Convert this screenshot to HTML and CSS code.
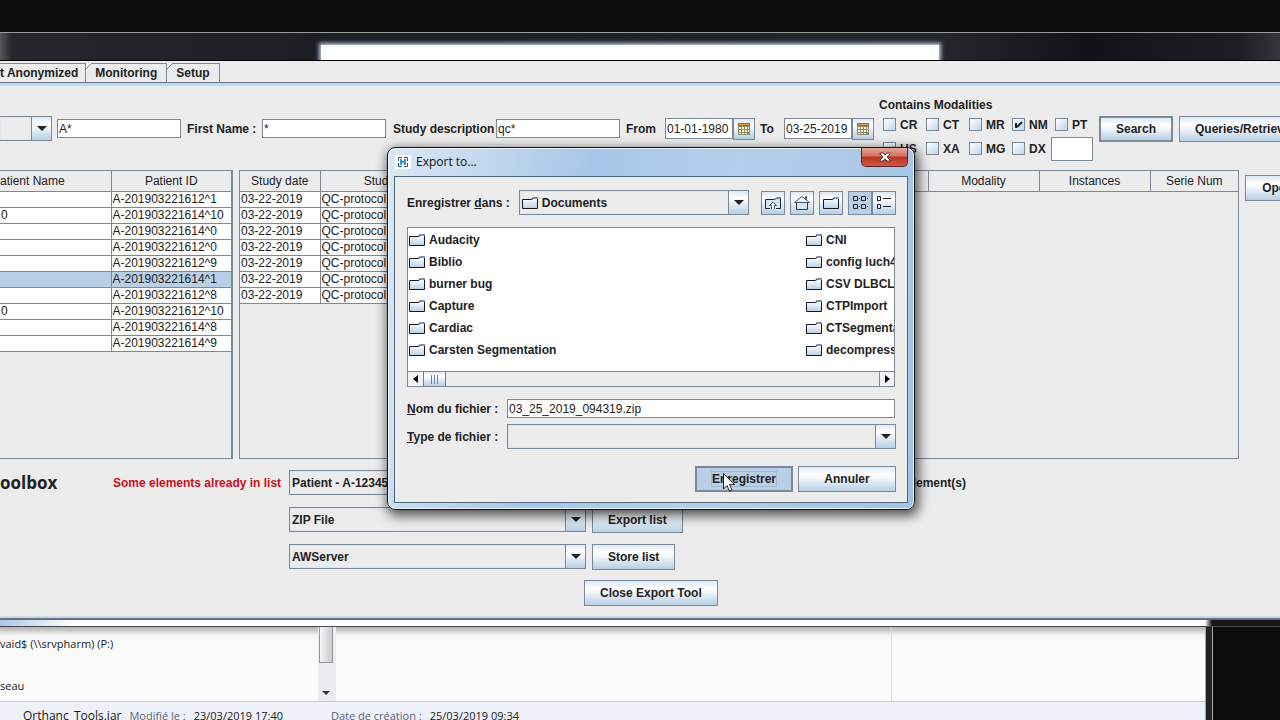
FILE: index.html
```html
<!DOCTYPE html>
<html lang="fr">
<head>
<meta charset="utf-8">
<title>Export to...</title>
<link rel="stylesheet" href="styles.css">
</head>
<body>
<svg class="defs" aria-hidden="true">
  <defs>
    <linearGradient id="fold" x1="0" y1="0" x2="0" y2="1"><stop offset="0" stop-color="#fff"/><stop offset="1" stop-color="#b8cfe5"/></linearGradient>
    <symbol id="folder" viewBox="0 0 16 16"><path d="M.5 4.500h9l2-1h4v10H.5z" fill="url(#fold)"/><path d="M9 4l2-2h5v2z" fill="#7a8fb5"/><path d="M.5 13.500v-9h9l1.500-1M15.500 4v9.500H.5" fill="none" stroke="#16181c"/></symbol>
    <symbol id="arrow" viewBox="0 0 10 5"><path d="M0 0h10L5 5z" fill="#222"/></symbol>
    <symbol id="calendar" viewBox="0 0 12 12"><path d="M0 0h12v12H0z" fill="#8f8d70"/><path d="M0 0h12v3H0z" fill="#b8641c"/><path d="M1 1h10v1H1z" fill="#e39a45"/><path d="M1 4h2v2H1zm3 0h2v2H4zm3 0h2v2H7zm3 0h1v2h-1zM1 7h2v2H1zm3 0h2v2H4zm3 0h2v2H7zm3 0h1v2h-1zM1 10h2v1H1zm3 0h2v1H4zm3 0h2v1H7z" fill="#fffbd0"/></symbol>
  </defs>
</svg>
<div class="desktop">
  <main class="window">
    <header class="titlebar"><div class="glass"></div></header>
    <nav class="tabs">
      <button class="tab first">t Anonymized</button><button class="tab">Monitoring</button><button class="tab">Setup</button>
    </nav>
    <section class="search">
      <div class="combo kind"><select aria-label="Search by"><option></option></select><span class="drop"><svg><use href="#arrow"/></svg></span></div>
      <input class="field" aria-label="Name" value="A*">
      <label class="l-first" for="first">First Name :</label><input class="field" id="first" value="*">
      <label class="l-study" for="study">Study description</label><input class="field" id="study" value="qc*">
      <label class="l-from" for="from">From</label><input class="field date" id="from" value="01-01-1980"><button class="cal" aria-label="Pick start date"><svg><use href="#calendar"/></svg></button>
      <label class="l-to" for="to">To</label><input class="field date" id="to" value="03-25-2019"><button class="cal" aria-label="Pick end date"><svg><use href="#calendar"/></svg></button>
      <div class="modalities">
        <div class="caption">Contains Modalities</div>
        <div class="checks">
          <label><input type="checkbox">CR</label><label><input type="checkbox">CT</label><label><input type="checkbox">MR</label><label><input type="checkbox" checked>NM</label><label><input type="checkbox">PT</label>
          <label><input type="checkbox">US</label><label><input type="checkbox">XA</label><label><input type="checkbox">MG</label><label><input type="checkbox">DX</label><input class="other" aria-label="Other modality">
        </div>
      </div>
      <button class="btn default">Search</button>
      <button class="btn queries">Queries/Retrieve</button>
    </section>
    <section class="results">
      <div class="panel patients">
        <table>
          <colgroup><col><col class="c-id"></colgroup>
          <thead><tr><th class="cut">atient Name</th><th>Patient ID</th></tr></thead>
          <tbody>
            <tr><td></td><td>A-201903221612^1</td></tr>
            <tr><td>0</td><td>A-201903221614^10</td></tr>
            <tr><td></td><td>A-201903221614^0</td></tr>
            <tr><td></td><td>A-201903221612^0</td></tr>
            <tr><td></td><td>A-201903221612^9</td></tr>
            <tr class="selected"><td></td><td>A-201903221614^1</td></tr>
            <tr><td></td><td>A-201903221612^8</td></tr>
            <tr><td>0</td><td>A-201903221612^10</td></tr>
            <tr><td></td><td>A-201903221614^8</td></tr>
            <tr><td></td><td>A-201903221614^9</td></tr>
          </tbody>
        </table>
      </div>
      <div class="panel studies">
        <table>
          <colgroup><col class="c-date"><col></colgroup>
          <thead><tr><th>Study date</th><th>Study Description</th></tr></thead>
          <tbody>
            <tr><td>03-22-2019</td><td>QC-protocol</td></tr>
            <tr><td>03-22-2019</td><td>QC-protocol</td></tr>
            <tr><td>03-22-2019</td><td>QC-protocol</td></tr>
            <tr><td>03-22-2019</td><td>QC-protocol</td></tr>
            <tr><td>03-22-2019</td><td>QC-protocol</td></tr>
            <tr><td>03-22-2019</td><td>QC-protocol</td></tr>
            <tr><td>03-22-2019</td><td>QC-protocol</td></tr>
          </tbody>
        </table>
      </div>
      <div class="panel series">
        <table>
          <colgroup><col><col class="c-mod"><col class="c-mod"><col class="c-num"></colgroup>
          <thead><tr><th></th><th>Modality</th><th>Instances</th><th>Serie Num</th></tr></thead>
        </table>
      </div>
      <button class="btn open">Open</button>
    </section>
    <section class="export">
      <h2>oolbox</h2>
      <p class="warning">Some elements already in list</p>
      <div class="controls">
        <div class="line">
          <div class="combo wide"><select aria-label="Export content"><option>Patient - A-12345</option></select><span class="drop"><svg><use href="#arrow"/></svg></span></div>
          <span class="count">element(s)</span>
        </div>
        <div class="line">
          <div class="combo wide"><select aria-label="Export format"><option>ZIP File</option></select><span class="drop"><svg><use href="#arrow"/></svg></span></div>
          <button class="btn">Export list</button>
        </div>
        <div class="line">
          <div class="combo wide"><select aria-label="Store destination"><option>AWServer</option></select><span class="drop"><svg><use href="#arrow"/></svg></span></div>
          <button class="btn">Store list</button>
        </div>
      </div>
      <button class="btn close-tool">Close Export Tool</button>
    </section>
    <div class="frame"><div class="frame-light"></div></div>
  </main>
  <section class="explorer">
    <div class="explorer-window">
      <div class="panes">
        <div class="tree"><div>vaid$ (\\srvpharm) (P:)</div><div>seau</div></div>
        <div class="scroll"><div class="thumb"></div><svg viewBox="0 0 8 4"><path d="M0 0h8L4 4z" fill="#333"/></svg></div>
        <div class="files"></div>
        <div class="preview"></div>
      </div>
      <div class="details"><span class="file">Orthanc_Tools.jar</span><span class="key">Modifié le :</span><span class="modified">23/03/2019 17:40</span><span class="key">Date de création :</span><span>25/03/2019 09:34</span></div>
    </div>
    <div class="edge"></div>
  </section>

  <div class="dialog" role="dialog" aria-label="Export to...">
    <div class="dialog-title">
      <svg class="logo" viewBox="0 0 16 14"><path d="M0 0h16v14H0z" fill="#fff"/><path d="M7 2.500H3.500V6M3.500 8v3.500H7M9 2.500h3.500V6M12.500 8v3.500H9" fill="none" stroke="#35586c"/><path d="M6 4v6M10 4v6M6 7h4" fill="none" stroke="#2b9bd0" stroke-width="2"/></svg>
      <span>Export to...</span>
      <button class="x" aria-label="Close"><svg viewBox="0 0 12 10"><path d="M1 1h3l2 2 2-2h3v1L8 5l3 3v1H8L6 7 4 9H1V8l3-3-3-3z" fill="#fff" stroke="#52363b"/></svg></button>
    </div>
    <form class="chooser">
      <div class="look">
        <label for="dir">Enregistrer <u>d</u>ans :</label>
        <div class="combo dir"><select id="dir"><option>Documents</option></select><svg class="folder"><use href="#folder"/></svg><span class="drop"><svg><use href="#arrow"/></svg></span></div>
        <button type="button" class="tool" aria-label="Up one level"><svg viewBox="0 0 16 16"><path d="M.5 13.500v-9H10l1.500-1h4v10z" fill="#d5e3f2"/><path d="M10 4l2-2h4v2z" fill="#6384b0"/><path d="M5 13.500H.5v-9h9l1.500-1M15.500 4v9.500H11" fill="none" stroke="#20262e"/><path d="M6.500 14v-3.500h-2L8 7l3.500 3.500h-2V14" fill="#fff" stroke="#2c5a8c"/></svg></button>
        <button type="button" class="tool" aria-label="Home"><svg viewBox="0 0 16 16"><path d="M2.500 7.500h11v7h-11z" fill="#d5e3f2" stroke="#333b44"/><path d="M11.500 4V1.500h1V5" fill="none" stroke="#46576a"/><path d="M.5 7.500L8 1.500l7.500 6z" fill="#eef4fa" stroke="#46576a"/></svg></button>
        <button type="button" class="tool" aria-label="New folder"><svg><use href="#folder"/></svg></button>
        <div class="views"><button type="button" class="tool on" aria-label="List"><svg viewBox="0 0 16 16" fill="none" stroke="#20262e"><path d="M1.500 1.500h4v4h-4zM9.500 1.500h4v4h-4zM1.500 9.500h4v4h-4zM9.500 9.500h4v4h-4z"/><path d="M7 3.500h1M15 3.500h1M7 11.500h1M15 11.500h1"/></svg></button><button type="button" class="tool" aria-label="Details"><svg viewBox="0 0 16 16" fill="none" stroke="#20262e"><path d="M1.500 1.500h3v4h-3zM1.500 9.500h3v4h-3zM7 3.500h8M7 11.500h8"/></svg></button></div>
      </div>
      <div class="browser">
        <ul class="listing">
          <li><svg class="folder"><use href="#folder"/></svg>Audacity</li>
          <li><svg class="folder"><use href="#folder"/></svg>Biblio</li>
          <li><svg class="folder"><use href="#folder"/></svg>burner bug</li>
          <li><svg class="folder"><use href="#folder"/></svg>Capture</li>
          <li><svg class="folder"><use href="#folder"/></svg>Cardiac</li>
          <li><svg class="folder"><use href="#folder"/></svg>Carsten Segmentation</li>
          <li><svg class="folder"><use href="#folder"/></svg>CNI</li>
          <li><svg class="folder"><use href="#folder"/></svg>config luch4</li>
          <li><svg class="folder"><use href="#folder"/></svg>CSV DLBCL</li>
          <li><svg class="folder"><use href="#folder"/></svg>CTPImport</li>
          <li><svg class="folder"><use href="#folder"/></svg>CTSegmentation</li>
          <li><svg class="folder"><use href="#folder"/></svg>decompress</li>
        </ul>
        <div class="hscroll"><span class="end"><svg viewBox="0 0 5 8"><path d="M5 0v8L0 4z"/></svg></span><span class="grip"><i></i><i></i><i></i></span><span class="track"></span><span class="end right"><svg viewBox="0 0 5 8"><path d="M0 0v8l5-4z"/></svg></span></div>
      </div>
      <div class="entry name"><label for="fname"><u>N</u>om du fichier :</label><input class="field" id="fname" value="03_25_2019_094319.zip"></div>
      <div class="entry"><label for="ftype"><u>T</u>ype de fichier :</label><div class="combo"><select id="ftype"><option></option></select><span class="drop"><svg><use href="#arrow"/></svg></span></div></div>
      <div class="actions">
        <button type="button" class="btn default pressed"><span>Enregistrer</span></button>
        <button type="button" class="btn">Annuler</button>
      </div>
    </form>
    <svg class="cursor" viewBox="0 0 12 19"><path d="M.5.500v15.500l3.500-3.500 2.500 5.500 2.500-1-2.500-5.500h5z" fill="#fff" stroke="#222"/></svg>
  </div>
</div>
</body>
</html>
```
FILE: styles.css
```css
* { box-sizing: border-box; }
body { margin: 0; background: #0c0c0c; color: #222; font: bold 12px/16px "Liberation Sans", Arial, sans-serif; overflow: hidden; }
button, input, select { font: inherit; color: inherit; margin: 0; border-radius: 0; }
svg { display: block; flex: none; }
.defs { position: absolute; width: 0; height: 0; }
.desktop { position: relative; height: 100vh; padding-top: 32px; display: flex; flex-direction: column; overflow: hidden; }

.window { flex: 1; min-height: 0; display: flex; flex-direction: column; background: #ececec; }
.titlebar { height: 29px; border-top: 1px solid #9b9b9b; border-bottom: 1px solid #000; background: linear-gradient(90deg, #55575a 0, #24272b 12px, #1b1e23 25%, #23262b 74%, #10141a 85%, #1c1f24 97%, #34373b); display: flex; overflow: hidden; }
.glass { flex: 1; margin: 12px 341px 0 321px; background: #fff; box-shadow: 0 0 4px 2px #b7cbe2; }

.tabs { height: 25px; padding-top: 2px; display: flex; border-bottom: 3px solid #c8d9e8; box-shadow: inset 0 -1px #60758e; flex: none; }
.tab { position: relative; height: 20px; padding: 0 9px 2px; background: none; border: 1px solid #7a8a99; border-width: 1px 1px 0 0; }
.tab.first { padding: 0 7px 2px 0; }
.tab + .tab::before { content: ""; position: absolute; left: 0; top: -1px; width: 6px; height: 6px; background: linear-gradient(135deg, #ececec 44%, #7a8a99 46%, #7a8a99 54%, #ececec 56%); }

.search { display: flex; align-items: center; height: 85px; flex: none; white-space: nowrap; }
.search > * { flex: none; }
.field { height: 19px; width: 124px; border: 1px solid #7a8a99; padding: 0 1px; background: #fff; font-weight: normal; outline: none; }
.field.date { width: 68px; height: 21px; }
.kind { width: 52px; margin-right: 5px; }
.combo.kind { border-left: 0; }
.l-first { width: 81px; padding-left: 6px; }
.l-study { width: 110px; padding-left: 7px; }
.l-from { width: 45px; padding-left: 6px; }
.l-to { width: 29px; padding-left: 5px; }
.cal { width: 22px; height: 22px; padding: 0; display: grid; place-items: center; border: 1px solid #7a8a99; background: linear-gradient(#dfe9f4, #fff 30%, #b8cfe5); }
.cal svg { width: 12px; height: 12px; }
.modalities { width: 214px; margin: 0 6px 0 5px; }
.caption { height: 16px; }
.checks { display: grid; grid-template-columns: repeat(5, 43px); grid-auto-rows: 24px; align-items: center; padding-left: 4px; width: 219px; }
.checks label { display: flex; align-items: center; gap: 4px; }
.checks input[type=checkbox] { appearance: none; width: 13px; height: 13px; border: 1px solid #7a8a99; background: linear-gradient(135deg, #fff, #c3d6ea); }
.checks input[type=checkbox]:checked { background: url("data:image/svg+xml,%3Csvg xmlns='http://www.w3.org/2000/svg' viewBox='0 0 11 11'%3E%3Cpath d='M3 4v5M4 8l5-5' fill='none' stroke='%23222' stroke-width='2'/%3E%3C/svg%3E"), linear-gradient(135deg, #fff, #c3d6ea); }
.other { width: 42px; height: 24px; border: 1px solid #7a8a99; background: #fff; margin-left: -4px; }

.btn { height: 26px; padding: 0 15px; border: 1px solid #7a8a99; background: linear-gradient(#dde8f3, #fff 30%, #f4f8fc 45%, #b8cfe5); white-space: nowrap; flex: none; }
.btn.default { border-width: 2px; }
.queries { margin-left: 6px; }

.combo { display: grid; grid-template-columns: 1fr 20px; height: 25px; border: 1px solid #7a8a99; box-shadow: inset 0 0 0 1px #dfe6f0; }
.combo select { grid-area: 1 / 1 / 2 / 3; appearance: none; border: 0; background: none; padding: 0 2px; outline: none; min-width: 0; }
.drop { grid-area: 1 / 2; display: grid; place-items: center; border-left: 1px solid #7a8a99; background: linear-gradient(#dde8f3, #fff 30%, #b8cfe5); pointer-events: none; }
.drop svg { width: 10px; height: 5px; }

.results { flex: 1; min-height: 0; display: flex; align-items: stretch; margin-top: -1px; font-weight: normal; }
.panel { border: 1px solid #7a8a99; border-right-width: 2px; margin-right: 6px; overflow: hidden; }
.patients { width: 233px; border-left: 0; }
.studies { width: 264px; }
.series { flex: 1; border-right-width: 1px; }
.panel table { width: 100%; table-layout: fixed; border-collapse: collapse; }
.panel th { height: 20px; padding: 0; font-weight: normal; border-right: 1px solid #7a8a99; border-bottom: 1px solid #7a8a99; white-space: nowrap; overflow: hidden; }
.panel td { height: 16px; line-height: 15px; padding: 0 1px; background: #fff; border-right: 1px solid #7a8a99; border-bottom: 1px solid #7a8a99; white-space: nowrap; overflow: hidden; }
.panel th:last-child, .panel td:last-child { border-right: 0; }
.panel th.cut { text-align: left; }
.panel .selected td { background: #b8cfe5; }
.c-id { width: 120px; }
.c-date { width: 80px; }
.c-mod { width: 111px; }
.c-num { width: 88px; }
.open { margin: 5px -30px 0 0; width: 65px; font-weight: bold; }

.export { display: grid; grid-template-columns: 113px 176px 1fr; padding: 11px 0 10px; flex: none; }
.export h2 { margin: 0; font: bold 17px/26px "Open Sans", sans-serif; }
.warning { margin: 0; line-height: 26px; color: #c80f1e; }
.controls { display: grid; gap: 12px; }
.line { display: flex; align-items: center; gap: 6px; height: 25px; }
.wide { width: 297px; }
.count { margin-left: 314px; }
.close-tool { grid-column: 3; justify-self: start; margin: 11px 0 0 295px; }
.frame { height: 11px; flex: none; border-top: 2px solid #cbd8ea; border-bottom: 1px solid #4a4a50; background: #66707e; }
.frame-light { height: 6px; margin-top: 2px; background: linear-gradient(90deg, #a8c8e6, #fff 75px, #fff 1205px, #15171b 1212px); }

.explorer { height: 93px; display: flex; flex: none; color: #1a1a1a; font: 12px/16px "Open Sans", "Noto Sans", sans-serif; }
.explorer-window { width: 1205px; display: flex; flex-direction: column; background: #fbfbfb; }
.panes { flex: 1; display: flex; background: linear-gradient(#b0b0b0, #f2f2f2 8px, #fbfbfb 14px); border-bottom: 1px solid #c3cfdf; }
.tree { width: 318px; padding-top: 9px; display: grid; align-content: start; gap: 26px; font-size: 11px; }
.scroll { width: 16px; display: flex; flex-direction: column; align-items: center; justify-content: space-between; background: #ececee; }
.thumb { width: 14px; height: 36px; border: 1px solid #999; border-top: 0; background: linear-gradient(90deg, #f6f6f6, #c9c9cb); }
.scroll svg { width: 8px; height: 4px; margin-bottom: 6px; }
.files { flex: 1; border-left: 2px solid #e8ebf0; }
.preview { width: 314px; border-left: 1px solid #dcdcde; }
.details { height: 18px; padding: 6px 0 0 23px; background: #eef1fa; display: flex; gap: 8px; white-space: nowrap; overflow: hidden; font-size: 11px; }
.file { font-size: 12px; }
.key { color: #5c6578; }
.modified { margin-right: 40px; }
.edge { width: 8px; background: #222; border: 1px solid #aaa; border-width: 0 1px; }

.dialog { position: absolute; left: 387px; top: 147px; width: 528px; padding: 0 6px 6px; border: 1px solid #10141a; border-radius: 8px; background: linear-gradient(100deg, #dbe8f5, #a7c6e7 35%, #b4cfeb 60%, #a3c2e3); box-shadow: inset 0 0 0 1px #eaf3fb, 2px 4px 12px 2px rgba(0,0,0,.65); }
.dialog-title { height: 28px; display: flex; align-items: center; gap: 5px; padding-left: 1px; color: #111; font: 12px/16px "Open Sans", "Noto Sans", sans-serif; }
.logo { width: 16px; height: 14px; }
.x { margin-left: auto; align-self: flex-start; width: 47px; height: 19px; padding: 0; display: grid; place-items: center; border: 1px solid #5a2228; border-top: 0; border-radius: 0 0 5px 5px; background: linear-gradient(#e3a79b, #d4705f 45%, #bc3320 50%, #cf5a42); }
.x svg { width: 12px; height: 10px; }
.chooser { border: 1px solid #4d6680; background: #ececec; padding: 13px 11px 10px 12px; }
.look { display: flex; align-items: center; gap: 5px; height: 25px; }
.look label { width: 107px; }
.dir { width: 231px; margin-right: 7px; }
.dir select { padding-left: 22px; }
.dir .folder { grid-area: 1 / 1; align-self: center; margin-left: 2px; pointer-events: none; }
.folder { width: 16px; height: 16px; }
.tool { width: 24px; height: 24px; padding: 0; display: grid; place-items: center; border: 1px solid #7a8a99; background: linear-gradient(#dde8f3, #fff 30%, #b8cfe5); }
.tool svg { width: 16px; height: 16px; }
.tool.on { background: #b8cfe5; }
.views { display: flex; }
.browser { margin: 12px 1px 0 0; border: 1px solid #7a8a99; background: #fff; }
.listing { list-style: none; margin: 0; padding: 1px 1px 0; height: 143px; overflow: hidden; display: grid; grid-auto-flow: column; grid-template-rows: repeat(6, 22px); grid-auto-columns: 397px; }
.listing li { display: flex; align-items: center; gap: 4px; white-space: nowrap; }
.hscroll { height: 15px; display: flex; border-top: 1px solid #7a8a99; background: #ececec; }
.end { width: 15px; display: grid; place-items: center; background: #f0f2f5; }
.end.right { border-left: 1px solid #7a8a99; }
.end svg { width: 5px; height: 8px; }
.grip { width: 23px; display: flex; gap: 2px; align-items: center; justify-content: center; border: 1px solid #6382a8; border-width: 0 1px; background: linear-gradient(#dde8f3, #fff 30%, #b8cfe5); }
.grip i { width: 1px; height: 9px; background: #6382a8; }
.track { flex: 1; }
.entry { display: flex; align-items: center; height: 25px; }
.entry.name { height: 19px; margin: 12px 1px 6px 0; }
.entry label { width: 100px; flex: none; }
.entry .field, .entry .combo { flex: 1; }
.actions { display: flex; justify-content: flex-end; gap: 5px; margin-top: 17px; }
.actions .btn { width: 98px; padding: 0; }
.actions .pressed { background: #b8cfe5; }
.pressed span { outline: 1px solid #a3b8cc; }
.cursor { position: absolute; left: 335px; top: 325px; width: 12px; height: 19px; }
```
